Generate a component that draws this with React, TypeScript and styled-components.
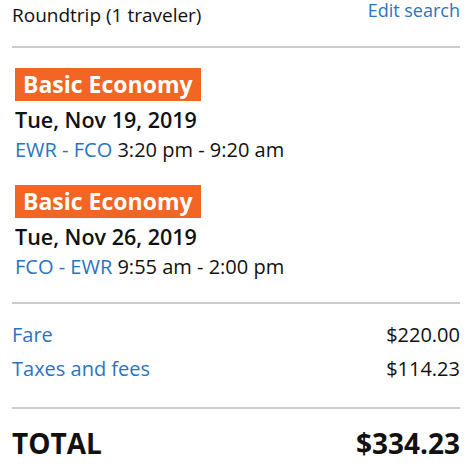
import React from "react";
import styled, { createGlobalStyle } from "styled-components";

const BLUE = "#2a74bf";
const ORANGE = "#f26522";
const RULE = "#cccccc";

const GlobalStyle = createGlobalStyle`
  html, body {
    margin: 0;
    padding: 0;
    background: #fff;
  }
  body {
    font-family: "Open Sans", "Noto Sans", sans-serif;
    color: #111;
  }
`;

const Summary = styled.div`
  width: 448px;
  padding: 0 10px 0 12px;
`;

const Header = styled.div`
  display: flex;
  justify-content: space-between;
  align-items: flex-start;
  height: 46px;
`;

const Title = styled.div`
  font-size: 19px;
  line-height: 31px;
`;

const EditLink = styled.a`
  color: ${BLUE};
  font-size: 18px;
  line-height: 21px;
  text-decoration: none;
`;

const Rule = styled.hr`
  margin: 0;
  border: 0;
  border-top: 2px solid ${RULE};
`;

const Flights = styled.div`
  display: flex;
  flex-direction: column;
  gap: 21px;
  padding: 20px 0 21px 3px;
`;

const Segment = styled.div`
  display: flex;
  flex-direction: column;
  align-items: flex-start;
`;

const Badge = styled.span`
  background: ${ORANGE};
  color: #fff;
  font-size: 23px;
  font-weight: 700;
  line-height: 33px;
  padding: 0 8px;
`;

const DateLine = styled.div`
  font-size: 21.5px;
  font-weight: 600;
  line-height: 28px;
  margin-top: 5px;
`;

const Route = styled.div`
  font-size: 20px;
  line-height: 28px;
  margin-top: 2px;
`;

const Airports = styled.span`
  color: ${BLUE};
`;

const Prices = styled.div`
  padding: 14px 0 21px;
`;

const PriceRow = styled.div`
  display: flex;
  justify-content: space-between;
  font-size: 20px;
  line-height: 34px;
`;

const PriceLabel = styled.span`
  color: ${BLUE};
`;

const TotalRow = styled.div`
  display: flex;
  justify-content: space-between;
  font-size: 28px;
  font-weight: 700;
  line-height: 40px;
  margin-top: 14px;
`;

const segments = [
  { date: "Tue, Nov 19, 2019", route: "EWR - FCO", times: "3:20 pm - 9:20 am" },
  { date: "Tue, Nov 26, 2019", route: "FCO - EWR", times: "9:55 am - 2:00 pm" },
];

export default function App() {
  return (
    <>
      <GlobalStyle />
      <Summary>
        <Header>
          <Title>Roundtrip (1 traveler)</Title>
          <EditLink href="#">Edit search</EditLink>
        </Header>
        <Rule />
        <Flights>
          {segments.map((s) => (
            <Segment key={s.date}>
              <Badge>Basic Economy</Badge>
              <DateLine>{s.date}</DateLine>
              <Route>
                <Airports>{s.route}</Airports> {s.times}
              </Route>
            </Segment>
          ))}
        </Flights>
        <Rule />
        <Prices>
          <PriceRow>
            <PriceLabel>Fare</PriceLabel>
            <span>$220.00</span>
          </PriceRow>
          <PriceRow>
            <PriceLabel>Taxes and fees</PriceLabel>
            <span>$114.23</span>
          </PriceRow>
        </Prices>
        <Rule />
        <TotalRow>
          <span>TOTAL</span>
          <span>$334.23</span>
        </TotalRow>
      </Summary>
    </>
  );
}
